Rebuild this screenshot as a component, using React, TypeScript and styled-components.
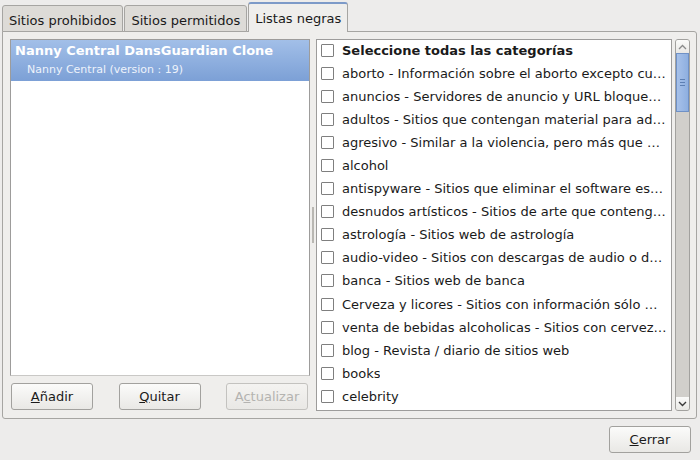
import styled, { createGlobalStyle } from "styled-components";

const GlobalStyle = createGlobalStyle`
  html, body {
    margin: 0;
    padding: 0;
    background: #edeceb;
  }
  body {
    font-family: "DejaVu Sans", "Liberation Sans", sans-serif;
    font-size: 13px;
    color: #1a1a1a;
  }
`;

const categories = [
  "aborto - Información sobre el aborto excepto cu…",
  "anuncios - Servidores de anuncio y URL bloque…",
  "adultos - Sitios que contengan material para ad…",
  "agresivo - Similar a la violencia, pero más que …",
  "alcohol",
  "antispyware - Sitios que eliminar el software es…",
  "desnudos artísticos - Sitios de arte que conteng…",
  "astrología - Sitios web de astrología",
  "audio-video - Sitios con descargas de audio o d…",
  "banca - Sitios web de banca",
  "Cerveza y licores - Sitios con información sólo …",
  "venta de bebidas alcoholicas - Sitios con cervez…",
  "blog - Revista / diario de sitios web",
  "books",
  "celebrity",
];

const App = () => {
  return (
    <Window>
      <GlobalStyle />
      <TabBar>
        <Tab>Sitios prohibidos</Tab>
        <Tab>Sitios permitidos</Tab>
        <Tab active>Listas negras</Tab>
      </TabBar>
      <Panel>
        <LeftPane>
          <ListBox>
            <SelectedItem>
              <ItemTitle>Nanny Central DansGuardian Clone</ItemTitle>
              <ItemSub>Nanny Central (version : 19)</ItemSub>
            </SelectedItem>
          </ListBox>
          <ButtonRow>
            <Button>
              <u>A</u>ñadir
            </Button>
            <Button>
              <u>Q</u>uitar
            </Button>
            <Button disabled>
              A<u>c</u>tualizar
            </Button>
          </ButtonRow>
        </LeftPane>
        <Handle />
        <RightPane>
          <CheckList>
            <Row>
              <Check />
              <Label bold>Seleccione todas las categorías</Label>
            </Row>
            {categories.map((c) => (
              <Row key={c}>
                <Check />
                <Label>{c}</Label>
              </Row>
            ))}
          </CheckList>
          <Scrollbar>
            <ArrowBtn>
              <svg width="9" height="6" viewBox="0 0 9 6">
                <path d="M1 5 L4.5 1.5 L8 5" fill="none" stroke="#8a8a8a" strokeWidth="1.3" />
              </svg>
            </ArrowBtn>
            <Track>
              <Thumb>
                <Grip />
                <Grip />
                <Grip />
              </Thumb>
            </Track>
            <ArrowBtn>
              <svg width="9" height="6" viewBox="0 0 9 6">
                <path d="M1 1 L4.5 4.5 L8 1" fill="none" stroke="#3a3a3a" strokeWidth="1.4" />
              </svg>
            </ArrowBtn>
          </Scrollbar>
        </RightPane>
      </Panel>
      <Footer>
        <Button>
          <u>C</u>errar
        </Button>
      </Footer>
    </Window>
  );
};

const Window = styled.div`
  width: 700px;
  height: 460px;
  box-sizing: border-box;
  padding: 3px 3px 0 2px;
  display: flex;
  flex-direction: column;
`;

const TabBar = styled.div`
  display: flex;
  align-items: flex-end;
  height: 29px;
  position: relative;
  z-index: 1;
  margin-bottom: -1px;
`;

const Tab = styled.div<{ active?: boolean }>`
  box-sizing: border-box;
  height: 27px;
  padding: 3px 6px 0;
  margin-right: 1px;
  display: flex;
  align-items: center;
  border: 1px solid #a6a5a2;
  border-radius: 3px 3px 0 0;
  background: #dddbd7;
  color: #1a1a1a;
  white-space: nowrap;
  ${(p) =>
    p.active &&
    `
    background: #efeeec;
    border-top: 2px solid #7d9ac8;
    border-bottom: none;
    padding-top: 0;
    height: 30px;
  `}
`;

const Panel = styled.div`
  height: 388px;
  box-sizing: border-box;
  border: 1px solid #a6a5a2;
  border-radius: 0 3px 3px 3px;
  background: #efeeec;
  padding: 7px 6px 7px 7px;
  display: flex;
`;

const LeftPane = styled.div`
  width: 300px;
  display: flex;
  flex-direction: column;
`;

const ListBox = styled.div`
  flex: 1;
  background: #ffffff;
  border: 1px solid #9d9c9b;
  border-bottom: 1px solid #c9c8c6;
`;

const SelectedItem = styled.div`
  height: 41px;
  box-sizing: border-box;
  padding: 2px 5px 0 4px;
  background: linear-gradient(#a2bfe8, #7ca0d6);
  color: #ffffff;
`;

const ItemTitle = styled.div`
  font-weight: bold;
  font-size: 13px;
  line-height: 18px;
  white-space: nowrap;
`;

const ItemSub = styled.div`
  font-size: 11px;
  line-height: 16px;
  padding: 2px 0 0 12px;
  color: #eef3fb;
`;

const ButtonRow = styled.div`
  display: flex;
  justify-content: space-between;
  margin-top: 7px;
  padding: 0 2px 1px 1px;
`;

const Button = styled.button`
  width: 82px;
  height: 27px;
  box-sizing: border-box;
  border: 1px solid #a2a19e;
  border-radius: 3px;
  background: linear-gradient(#fbfbfa, #e9e8e5);
  font-family: "DejaVu Sans", "Liberation Sans", sans-serif;
  font-size: 13px;
  color: #1a1a1a;
  padding: 0;
  &:disabled {
    color: #b4b3b0;
    border-color: #c3c2bf;
    background: linear-gradient(#f4f3f1, #e9e8e5);
  }
`;

const Handle = styled.div`
  width: 6px;
  display: flex;
  justify-content: center;
  align-items: center;
  &::before {
    content: "";
    width: 2px;
    height: 36px;
    background-image: radial-gradient(circle, #b5b3ae 0.7px, transparent 0.8px);
    background-size: 2px 2px;
  }
`;

const RightPane = styled.div`
  flex: 1;
  display: flex;
  gap: 3px;
`;

const CheckList = styled.div`
  flex: 1;
  background: #ffffff;
  border: 1px solid #9d9c9b;
  overflow: hidden;
`;

const Row = styled.div`
  height: 23.06px;
  display: flex;
  align-items: center;
  padding-left: 4px;
  &:first-child {
    margin-top: -1px;
  }
`;

const Check = styled.span`
  width: 13px;
  height: 13px;
  box-sizing: border-box;
  border: 1px solid #7f7f7f;
  border-radius: 1px;
  background: #ffffff;
  flex-shrink: 0;
  margin-right: 8px;
`;

const Label = styled.span<{ bold?: boolean }>`
  font-weight: ${(p) => (p.bold ? "bold" : "normal")};
  white-space: nowrap;
  overflow: hidden;
`;

const Scrollbar = styled.div`
  width: 15px;
  display: flex;
  flex-direction: column;
  border: 1px solid #a2a19e;
  border-radius: 3px;
  box-sizing: border-box;
  background: #d4d2ce;
  overflow: hidden;
`;

const ArrowBtn = styled.div`
  height: 13px;
  display: flex;
  align-items: center;
  justify-content: center;
  background: linear-gradient(#fbfbfa, #e9e8e5);
`;

const Track = styled.div`
  flex: 1;
  background: #d1cfcb;
`;

const Thumb = styled.div`
  height: 59px;
  box-sizing: border-box;
  border: 1px solid #6f91c6;
  background: linear-gradient(90deg, #a7c1e9, #8eafe0);
  display: flex;
  flex-direction: column;
  justify-content: center;
  align-items: center;
  gap: 2px;
`;

const Grip = styled.div`
  width: 5px;
  height: 1px;
  background: #5d7fb3;
`;

const Footer = styled.div`
  display: flex;
  justify-content: flex-end;
  padding: 7px 6px 0 0;
`;

export default App;
